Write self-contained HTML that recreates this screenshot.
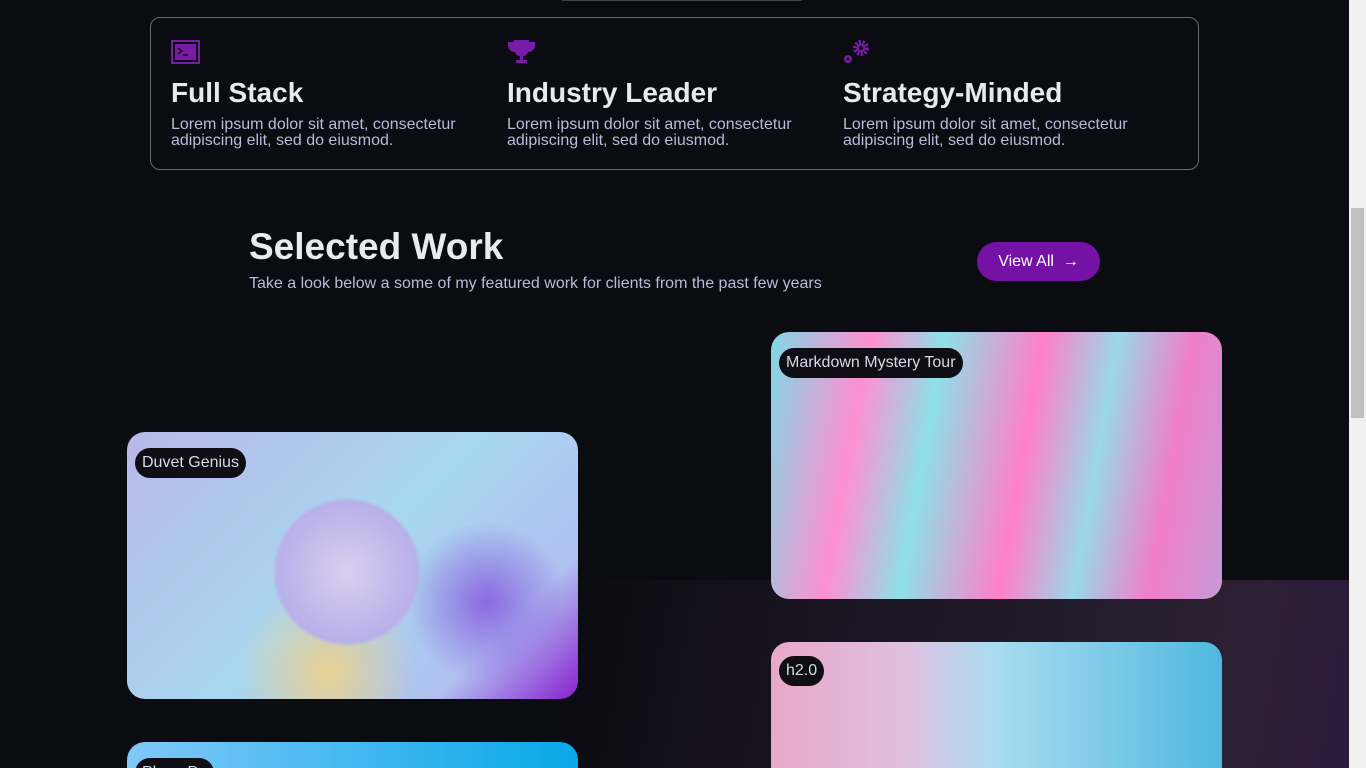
<!DOCTYPE html>
<html><head><style>
html,body{margin:0;width:1366px;height:768px;overflow:hidden;background:#0b0b12;font-family:"Liberation Sans",sans-serif}
.wrap{position:relative;width:1366px;height:768px;overflow:hidden}
.bg{position:absolute;left:0;top:0;width:1349px;height:768px;background:#0b0b12}
.glow{position:absolute;left:560px;top:580px;width:789px;height:188px;background:linear-gradient(100deg,rgba(13,12,20,0) 0%,#17131f 30%,#241c2c 65%,#2e2034 85%,#2a1a3c 100%)}
.sb{position:absolute;right:0;top:0;width:17px;height:768px;background:#f1f1f1}
.thumb{position:absolute;right:2px;top:208px;width:13px;height:210px;background:#c1c1c1}
.box{position:absolute;left:150px;top:17px;width:1047px;height:151px;border:1px solid #6a6a72;border-radius:10px}
.col{position:absolute;top:22px;color:#e8e8f0}
.col svg{display:block}
.col h3{margin:12px 0 0;font-size:28px;font-weight:bold;line-height:34px;letter-spacing:0px}
.col p{margin:7px 0 0;font-size:16px;line-height:16px;color:#b8bcd8}
h2{position:absolute;left:249px;top:226px;margin:0;font-size:37px;color:#eaeaf2}
.sub{position:absolute;left:249px;top:275px;font-size:16px;color:#b8bcd8;letter-spacing:0px}
.btn{position:absolute;left:977px;top:242px;width:123px;height:39px;border-radius:20px;background:#7611a6;color:#fff;font-size:16px;line-height:39px;text-align:center}
.card{position:absolute;border-radius:18px;overflow:hidden}
.tag{position:absolute;left:8px;top:16px;background:#0e0e14;color:#d8d8e8;font-size:16px;padding:6px 7px;border-radius:15px}
</style></head><body><div class="wrap">
<div class="bg"></div><div class="glow"></div>
<div style="position:absolute;left:562px;top:0;width:240px;height:1px;background:#444"></div>
<div class="box">
 <div class="col" style="left:20px"><svg width="29" height="24"><rect x="1" y="1" width="27" height="22" fill="none" stroke="#7a1aa8" stroke-width="2"/><rect x="4" y="4" width="21" height="16" fill="#7a1aa8"/><path d="M7 8l4 3-4 3M12 15h5" stroke="#111" stroke-width="1.5" fill="none"/></svg><h3>Full Stack</h3><p>Lorem ipsum dolor sit amet, consectetur<br>adipiscing elit, sed do eiusmod.</p></div>
 <div class="col" style="left:356px"><svg width="29" height="24"><path d="M8 1h13v8a6.5 6.5 0 0 1-13 0z M8 3H2v3a6 6 0 0 0 6 5 M21 3h6v3a6 6 0 0 1-6 5" fill="#7a1aa8" stroke="#7a1aa8" stroke-width="2"/><rect x="13" y="15" width="3" height="5" fill="#7a1aa8"/><rect x="9" y="20" width="11" height="3" fill="#7a1aa8"/></svg><h3>Industry Leader</h3><p>Lorem ipsum dolor sit amet, consectetur<br>adipiscing elit, sed do eiusmod.</p></div>
 <div class="col" style="left:692px"><svg width="29" height="24"><circle cx="18" cy="8" r="6" fill="none" stroke="#7a1aa8" stroke-width="4" stroke-dasharray="2.2 1.5"/><circle cx="18" cy="8" r="4.5" fill="#7a1aa8"/><circle cx="18" cy="8" r="2.2" fill="#0c0c14"/><circle cx="5" cy="19" r="4" fill="#7a1aa8"/><circle cx="5" cy="19" r="1.5" fill="#0c0c14"/></svg><h3>Strategy-Minded</h3><p>Lorem ipsum dolor sit amet, consectetur<br>adipiscing elit, sed do eiusmod.</p></div>
</div>
<h2>Selected Work</h2>
<div class="sub">Take a look below a some of my featured work for clients from the past few years</div>
<div class="btn">View All &nbsp;<b>→</b></div>
<div class="card" style="left:771px;top:332px;width:451px;height:267px;background:linear-gradient(100deg,#7fd8e6 0%,#ff8fd0 20%,#8ee0e8 35%,#ff7fc8 55%,#9ad8e8 70%,#f07ec8 85%,#c69ad8 100%)"><div class="tag">Markdown Mystery Tour</div></div>
<div class="card" style="left:127px;top:432px;width:451px;height:267px;background:radial-gradient(circle at 220px 140px,#d8d0f0 0,#b8b0e8 70px,transparent 75px),radial-gradient(circle at 360px 170px,#8a6ae0 0,transparent 80px),radial-gradient(circle at 200px 240px,#e8d090 0,transparent 90px),linear-gradient(135deg,#b8b8e8,#a8d8f0 50%,#b0c0f0 80%,#8a20d0)"><div class="tag">Duvet Genius</div></div>
<div class="card" style="left:771px;top:642px;width:451px;height:126px;border-radius:18px 18px 0 0;background:linear-gradient(90deg,#e8a8c8 0%,#e0c0e0 30%,#a8dcf0 50%,#50b8e0 100%)"><div class="tag" style="top:14px">h2.0</div></div>
<div class="card" style="left:127px;top:742px;width:451px;height:26px;border-radius:18px 18px 0 0;background:linear-gradient(90deg,#80c8f8,#08a8e8)"><div class="tag" style="top:16px">Plane Pa</div></div>
<div class="sb"><div class="thumb"></div></div>
</div></body></html>
